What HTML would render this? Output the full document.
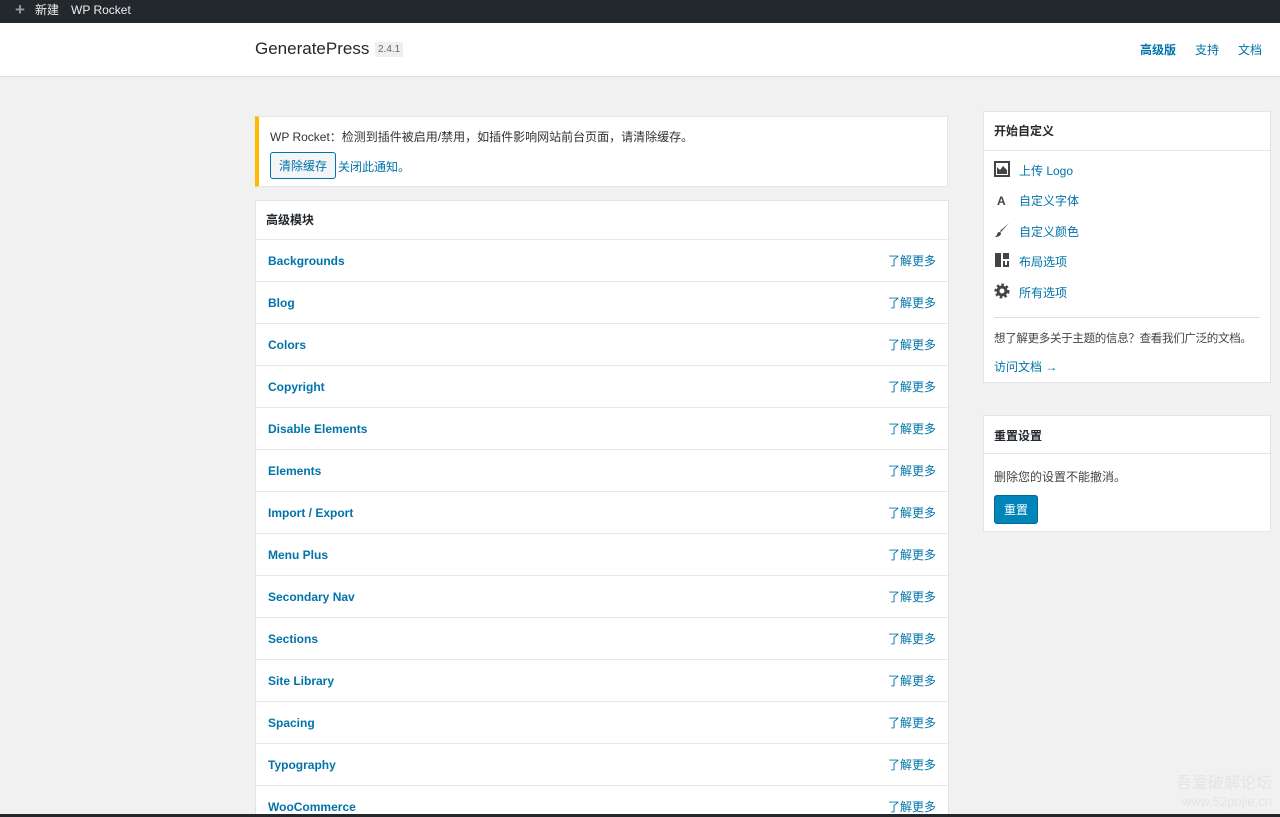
<!DOCTYPE html>
<html style="height:817px;overflow:hidden"><head><meta charset="utf-8"><style>
*{box-sizing:border-box;margin:0;padding:0}
body{width:1280px;height:817px;overflow:hidden;background:#f1f1f1;font-family:"Liberation Sans","Noto Sans CJK SC",sans-serif;font-size:12px;color:#444;position:relative}
.bar{position:absolute;left:0;top:0;width:1280px;height:23px;background:#23282d;color:#eee;font-size:12px;line-height:21px}
.hdr{position:absolute;left:0;top:23px;width:1280px;height:54px;background:#fff;border-bottom:1px solid #ddd}
a{color:#0073aa;text-decoration:none}
.box{position:absolute;background:#fff;border:1px solid #e2e4e7}
.row{height:42px;border-top:1px solid #e8e8e8;display:flex;justify-content:space-between;align-items:center;padding:0 12px;font-weight:bold;font-size:12px}
.row span{font-weight:normal}
.bh{font-weight:bold;color:#23282d;font-size:12px;padding:0 10px}
.li{height:30.5px;display:flex;align-items:center;padding-left:10px}
.li i{width:25px;display:inline-block;font-style:normal;color:#444}
</style></head><body>
<div class="bar"><span style="position:absolute;left:15px;font-size:17px;color:#999;top:-1px;font-weight:bold">+</span><span style="position:absolute;left:35px">新建</span><span style="position:absolute;left:71px">WP Rocket</span></div>
<div class="hdr">
<span style="position:absolute;left:255px;top:16px;font-size:17px;color:#23282d">GeneratePress</span>
<span style="position:absolute;left:375px;top:19px;font-size:10px;background:#efefef;padding:2px 3px;color:#666">2.4.1</span>
<a style="position:absolute;left:1140px;top:18px;font-weight:bold">高级版</a>
<a style="position:absolute;left:1195px;top:18px">支持</a>
<a style="position:absolute;left:1238px;top:18px">文档</a>
</div>
<div class="box" style="left:255px;top:116px;width:693px;height:71px;border-left:4px solid #ffb900">
<div style="position:absolute;left:11px;top:11px;font-size:12px;color:#333">WP Rocket：检测到插件被启用/禁用，如插件影响网站前台页面，请清除缓存。</div>
<div style="position:absolute;left:11px;top:35px;border:1px solid #0073aa;border-radius:3px;background:#f3f5f6;color:#0073aa;padding:4px 8px">清除缓存</div>
<a style="position:absolute;left:79px;top:41px">关闭此通知。</a>
</div>
<div class="box" style="left:255px;top:200px;width:694px;height:620px;overflow:hidden">
<div class="bh" style="height:38px;line-height:38px">高级模块</div>
<div class="row"><a>Backgrounds</a><a><span>了解更多</span></a></div>
<div class="row"><a>Blog</a><a><span>了解更多</span></a></div>
<div class="row"><a>Colors</a><a><span>了解更多</span></a></div>
<div class="row"><a>Copyright</a><a><span>了解更多</span></a></div>
<div class="row"><a>Disable Elements</a><a><span>了解更多</span></a></div>
<div class="row"><a>Elements</a><a><span>了解更多</span></a></div>
<div class="row"><a>Import / Export</a><a><span>了解更多</span></a></div>
<div class="row"><a>Menu Plus</a><a><span>了解更多</span></a></div>
<div class="row"><a>Secondary Nav</a><a><span>了解更多</span></a></div>
<div class="row"><a>Sections</a><a><span>了解更多</span></a></div>
<div class="row"><a>Site Library</a><a><span>了解更多</span></a></div>
<div class="row"><a>Spacing</a><a><span>了解更多</span></a></div>
<div class="row"><a>Typography</a><a><span>了解更多</span></a></div>
<div class="row"><a>WooCommerce</a><a><span>了解更多</span></a></div>
</div>
<div class="box" style="left:983px;top:111px;width:288px;height:272px">
<div class="bh" style="height:39px;line-height:39px;border-bottom:1px solid #e2e4e7">开始自定义</div>
<div style="padding-top:4px">
<div class="li"><i><svg width="16" height="16"><rect x="1" y="1" width="14" height="14" fill="none" stroke="#444" stroke-width="2"/><path d="M3 13V6l3 3 3-4 4 4v4z" fill="#444"/></svg></i><a>上传 Logo</a></div>
<div class="li"><i style="font-weight:bold;padding-left:3px">A</i><a>自定义字体</a></div>
<div class="li"><i><svg width="16" height="16"><path d="M15 1L7 10l-1-1zM6 10c-2 0-3 1-3 3l-2 2c3 0 6-1 6-4z" fill="#444"/></svg></i><a>自定义颜色</a></div>
<div class="li"><i><svg width="16" height="16"><path d="M1 1h6v14H1zM9 1h6v6H9zM9 9h6v6H9z" fill="#444"/><path d="M11 9h2v4h-2z" fill="#fff"/></svg></i><a>布局选项</a></div>
<div class="li"><i><svg width="16" height="16"><circle cx="8" cy="8" r="5.5" fill="none" stroke="#444" stroke-width="4" stroke-dasharray="2.2 2"/><circle cx="8" cy="8" r="4" fill="none" stroke="#444" stroke-width="3"/></svg></i><a>所有选项</a></div>
</div>
<div style="margin:9px 10px 0;border-top:1px solid #ddd;padding-top:12px;color:#444;white-space:nowrap;font-size:11.5px;letter-spacing:-0.3px">想了解更多关于主题的信息？查看我们广泛的文档。</div>
<a style="display:block;margin:12px 10px 0">访问文档 →</a>
</div>
<div class="box" style="left:983px;top:415px;width:288px;height:117px">
<div class="bh" style="height:38px;line-height:40px;border-bottom:1px solid #e2e4e7">重置设置</div>
<div style="padding:14px 10px 0">删除您的设置不能撤消。</div>
<div style="position:absolute;left:10px;top:79px;background:#0085ba;color:#fff;border-radius:3px;padding:5px 9px;border:1px solid #006799">重置</div>
</div>
<div style="position:absolute;right:8px;top:775px;color:#e4e4e4;font-size:16px;text-align:right;line-height:18px">吾爱破解论坛<br><span style="font-size:13px">www.52pojie.cn</span></div>
<div style="position:absolute;left:0;top:814px;width:1280px;height:3px;background:#23282d"></div>
</body></html>
